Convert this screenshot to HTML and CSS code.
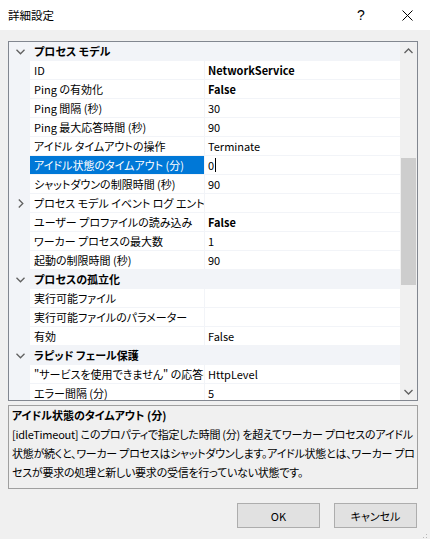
FILE: index.html
```html
<!DOCTYPE html>
<html lang="ja">
<head>
<meta charset="utf-8">
<title>詳細設定</title>
<link rel="stylesheet" href="styles.css">
</head>
<body>
<div class="titlebar">
  <span class="title">詳細設定</span>
  <span class="tb-btn help">?</span>
  <span class="tb-btn close"><svg width="11" height="11" viewBox="0 0 11 11"><path d="M0.5 0.5 L10.5 10.5 M10.5 0.5 L0.5 10.5" stroke="#000" stroke-width="1" fill="none"/></svg></span>
</div>
<div class="content">
  <div class="grid">
    <div class="rows">
      <div class="row cat"><span class="m"><svg class="chev" width="9" height="6" viewBox="0 0 9 6"><path d="M0.5 0.8 L4.5 4.8 L8.5 0.8" stroke="#606060" stroke-width="1.3" fill="none"/></svg></span><span class="name">プロセス モデル</span></div>
      <div class="row"><span class="m"></span><span class="name">ID</span><span class="val b">NetworkService</span></div>
      <div class="row"><span class="m"></span><span class="name">Ping の有効化</span><span class="val b">False</span></div>
      <div class="row"><span class="m"></span><span class="name">Ping 間隔 (秒)</span><span class="val">30</span></div>
      <div class="row"><span class="m"></span><span class="name">Ping 最大応答時間 (秒)</span><span class="val">90</span></div>
      <div class="row"><span class="m"></span><span class="name">アイドル タイムアウトの操作</span><span class="val">Terminate</span></div>
      <div class="row sel"><span class="m"></span><span class="name">アイドル状態のタイムアウト (分)</span><span class="val">0<span class="caret"></span></span></div>
      <div class="row"><span class="m"></span><span class="name">シャットダウンの制限時間 (秒)</span><span class="val">90</span></div>
      <div class="row"><span class="m"><svg class="chev" width="6" height="9" viewBox="0 0 6 9"><path d="M0.8 0.5 L4.8 4.5 L0.8 8.5" stroke="#606060" stroke-width="1.3" fill="none"/></svg></span><span class="name">プロセス モデル イベント ログ エントリの種類</span><span class="val"></span></div>
      <div class="row"><span class="m"></span><span class="name">ユーザー プロファイルの読み込み</span><span class="val b">False</span></div>
      <div class="row"><span class="m"></span><span class="name">ワーカー プロセスの最大数</span><span class="val">1</span></div>
      <div class="row"><span class="m"></span><span class="name">起動の制限時間 (秒)</span><span class="val">90</span></div>
      <div class="row cat"><span class="m"><svg class="chev" width="9" height="6" viewBox="0 0 9 6"><path d="M0.5 0.8 L4.5 4.8 L8.5 0.8" stroke="#606060" stroke-width="1.3" fill="none"/></svg></span><span class="name">プロセスの孤立化</span></div>
      <div class="row"><span class="m"></span><span class="name">実行可能ファイル</span><span class="val"></span></div>
      <div class="row"><span class="m"></span><span class="name">実行可能ファイルのパラメーター</span><span class="val"></span></div>
      <div class="row"><span class="m"></span><span class="name">有効</span><span class="val">False</span></div>
      <div class="row cat"><span class="m"><svg class="chev" width="9" height="6" viewBox="0 0 9 6"><path d="M0.5 0.8 L4.5 4.8 L8.5 0.8" stroke="#606060" stroke-width="1.3" fill="none"/></svg></span><span class="name">ラピッド フェール保護</span></div>
      <div class="row"><span class="m"></span><span class="name">"サービスを使用できません" の応答の種類</span><span class="val">HttpLevel</span></div>
      <div class="row"><span class="m"></span><span class="name">エラー間隔 (分)</span><span class="val">5</span></div>
    </div>
    <div class="sb">
      <span class="arr"><svg width="9" height="6" viewBox="0 0 9 6"><path d="M0.5 5 L4.5 1 L8.5 5" stroke="#606060" stroke-width="1.3" fill="none"/></svg></span>
      <div class="track"><div class="thumb"></div></div>
      <span class="arr"><svg width="9" height="6" viewBox="0 0 9 6"><path d="M0.5 1 L4.5 5 L8.5 1" stroke="#606060" stroke-width="1.3" fill="none"/></svg></span>
    </div>
  </div>
  <div class="desc">
    <div class="desc-title">アイドル状態のタイムアウト (分)</div>
    <div class="desc-text">[idleTimeout] このプロパティで指定した時間 (分) を超えてワーカー プロセスのアイドル<br>状態が続くと、ワーカー プロセスはシャットダウンします。アイドル状態とは、ワーカー プロ<br>セスが要求の処理と新しい要求の受信を行っていない状態です。</div>
  </div>
  <div class="buttons">
    <span class="btn">OK</span>
    <span class="btn">キャンセル</span>
  </div>
</div>
<div class="grip"><svg width="8" height="8" viewBox="0 0 8 8"><g fill="#b8b8b8"><rect x="6" y="0" width="1" height="1"/><rect x="3" y="3" width="1" height="1"/><rect x="6" y="3" width="1" height="1"/><rect x="0" y="6" width="1" height="1"/><rect x="3" y="6" width="1" height="1"/><rect x="6" y="6" width="1" height="1"/></g></svg></div>
</body>
</html>
```
FILE: styles.css
```css
html, body {
  margin: 0;
  padding: 0;
}
body {
  width: 430px;
  height: 539px;
  overflow: hidden;
  position: relative;
  background: #f0f0f0;
  font-family: "Noto Sans CJK JP", sans-serif;
  font-size: 11px;
  color: #000;
  font-feature-settings: "palt";
}
.titlebar {
  height: 30px;
  background: #fff;
  display: flex;
  align-items: center;
}
.title {
  flex: 1;
  padding-left: 8px;
  font-size: 11.5px;
}
.tb-btn {
  width: 46px;
  height: 30px;
  display: flex;
  align-items: center;
  justify-content: center;
}
.help {
  font-size: 14px;
  font-family: "Liberation Sans", sans-serif;
}
.content {
  padding: 11px 12px 0 8px;
}
.grid {
  height: 360px;
  box-sizing: border-box;
  border: 1px solid #828790;
  background: #fff;
  display: flex;
}
.rows {
  flex: 1;
  overflow: hidden;
}
.row {
  display: flex;
  height: 19px;
  line-height: 18px;
  white-space: nowrap;
}
.m {
  width: 21px;
  flex: none;
  background: #f2f4f8;
  display: flex;
  align-items: center;
  justify-content: center;
  height: 19px;
  padding-left: 2px;
  box-sizing: border-box;
}
.name {
  width: 175px;
  flex: none;
  box-sizing: border-box;
  height: 19px;
  padding-left: 4px;
  overflow: hidden;
  border-bottom: 1px solid #f2f4f8;
  border-right: 1px solid #f2f4f8;
}
.val {
  flex: 1;
  box-sizing: border-box;
  height: 19px;
  padding-left: 3px;
  border-bottom: 1px solid #f2f4f8;
  display: flex;
  align-items: center;
}
.b {
  font-weight: bold;
}
.cat {
  background: #f2f4f8;
}
.cat .name {
  width: auto;
  flex: 1;
  border: none;
  font-weight: bold;
}
.sel .name {
  background: #0078d7;
  color: #fff;
}
.caret {
  display: inline-block;
  width: 1px;
  height: 14px;
  background: #000;
  margin-left: 1px;
}
.sb {
  width: 17px;
  flex: none;
  background: #f0f0f0;
  display: flex;
  flex-direction: column;
}
.arr {
  height: 17px;
  flex: none;
  display: flex;
  align-items: center;
  justify-content: center;
}
.track {
  flex: 1;
  padding-top: 99px;
}
.thumb {
  margin-left: 1px;
  width: 15px;
  height: 127px;
  background: #cdcdcd;
}
.desc {
  margin-top: 4px;
  height: 84px;
  box-sizing: border-box;
  border: 1px solid #a0a0a0;
  padding: 0 3px;
  line-height: 19px;
  white-space: nowrap;
  overflow: hidden;
}
.desc-title {
  font-weight: bold;
}
.desc-text {
  letter-spacing: -0.25px;
}
.buttons {
  display: flex;
  justify-content: flex-end;
  gap: 14px;
  margin-top: 14px;
  padding-right: 1px;
}
.btn {
  width: 83px;
  height: 25px;
  box-sizing: border-box;
  border: 1px solid #adadad;
  background: #e1e1e1;
  display: flex;
  align-items: center;
  justify-content: center;
}
.grip {
  position: absolute;
  right: 2px;
  bottom: 2px;
  width: 8px;
  height: 8px;
}
```
